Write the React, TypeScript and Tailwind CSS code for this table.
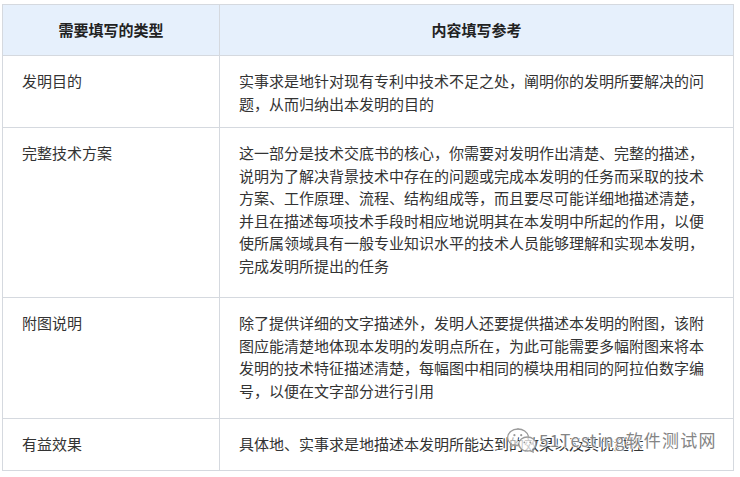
import React from "react";

const rows: { type: string; content: string; h: string }[] = [
  {
    type: "发明目的",
    content: "实事求是地针对现有专利中技术不足之处，阐明你的发明所要解决的问题，从而归纳出本发明的目的",
    h: "h-[72px]",
  },
  {
    type: "完整技术方案",
    content:
      "这一部分是技术交底书的核心，你需要对发明作出清楚、完整的描述，说明为了解决背景技术中存在的问题或完成本发明的任务而采取的技术方案、工作原理、流程、结构组成等，而且要尽可能详细地描述清楚，并且在描述每项技术手段时相应地说明其在本发明中所起的作用，以便使所属领域具有一般专业知识水平的技术人员能够理解和实现本发明，完成发明所提出的任务",
    h: "h-[170px]",
  },
  {
    type: "附图说明",
    content:
      "除了提供详细的文字描述外，发明人还要提供描述本发明的附图，该附图应能清楚地体现本发明的发明点所在，为此可能需要多幅附图来将本发明的技术特征描述清楚，每幅图中相同的模块用相同的阿拉伯数字编号，以便在文字部分进行引用",
    h: "h-[121px]",
  },
  {
    type: "有益效果",
    content: "具体地、实事求是地描述本发明所能达到的效果以及其优越性",
    h: "h-[52px]",
  },
];

function WeChatIcon() {
  return (
    <svg width="32" height="26" viewBox="0 0 32 26" fill="none">
      <path
        d="M12 2C6.2 2 1.6 5.8 1.6 10.4c0 2.6 1.4 4.9 3.7 6.4l-1 3.2 3.8-2c1.2.3 2.5.5 3.9.5"
        stroke="#9a9a9a"
        strokeWidth="1.3"
        fill="rgba(255,255,255,0.6)"
        strokeLinecap="round"
        strokeLinejoin="round"
      />
      <path
        d="M22.4 9.2C21.3 5.1 17 2 12 2"
        stroke="#9a9a9a"
        strokeWidth="1.3"
        strokeLinecap="round"
      />
      <circle cx="8.4" cy="8.2" r="1.1" fill="#9a9a9a" />
      <circle cx="15.2" cy="8.2" r="1.1" fill="#9a9a9a" />
      <path
        d="M21.4 10c-4.8 0-8.6 3.1-8.6 7s3.8 7 8.6 7c1 0 2-.1 2.9-.4l3 1.6-.8-2.6c2-1.3 3.4-3.3 3.4-5.6 0-3.9-3.8-7-8.5-7z"
        stroke="#9a9a9a"
        strokeWidth="1.3"
        fill="rgba(255,255,255,0.75)"
        strokeLinejoin="round"
      />
      <circle cx="18.4" cy="15.4" r="0.9" fill="#9a9a9a" />
      <circle cx="24.4" cy="15.4" r="0.9" fill="#9a9a9a" />
    </svg>
  );
}

export default function App() {
  return (
    <div
      className="relative w-[740px] h-[477px] bg-white text-[#333333] overflow-hidden"
      style={{ fontFamily: '"Noto Sans CJK SC", "Noto Sans", sans-serif' }}
    >
      <table className="ml-[2px] mt-[4px] w-[732px] border-collapse table-fixed text-[15px] leading-[22.6px]">
        <colgroup>
          <col className="w-[217px]" />
          <col />
        </colgroup>
        <thead>
          <tr className="h-[51px] bg-[#e6f0fc]">
            <th className="border border-[#d5d9df] font-bold text-[#222] text-center align-middle">
              需要填写的类型
            </th>
            <th className="border border-[#d5d9df] font-bold text-[#222] text-center align-middle">
              内容填写参考
            </th>
          </tr>
        </thead>
        <tbody>
          {rows.map((r) => (
            <tr key={r.type} className={r.h}>
              <td className="border border-[#d5d9df] align-top pl-[19px] pr-[19px] pt-[14px]">
                {r.type}
              </td>
              <td className="border border-[#d5d9df] align-top pl-[19px] pr-[19px] pt-[14px]">
                {r.content}
              </td>
            </tr>
          ))}
        </tbody>
      </table>
      <div className="absolute left-[506px] top-[427px] flex items-center gap-[1px]">
        <WeChatIcon />
        <span
          className="text-[17px] tracking-[1.2px] text-[#858585] whitespace-nowrap"
          style={{
            textShadow:
              "1px 0 1px #fff, -1px 0 1px #fff, 0 1px 1px #fff, 0 -1px 1px #fff",
          }}
        >
          51Testing软件测试网
        </span>
      </div>
    </div>
  );
}
